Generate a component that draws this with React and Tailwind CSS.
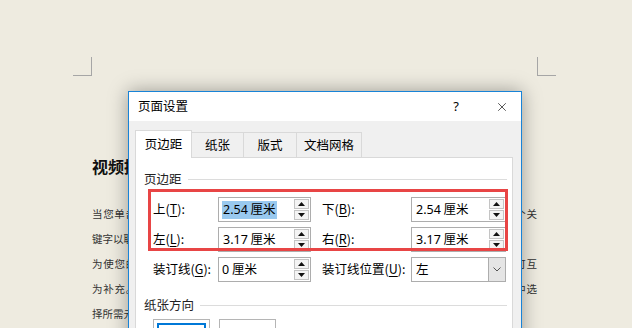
import { X } from 'lucide-react'

const cjk = { fontFamily: '"Microsoft YaHei UI","Noto Sans CJK SC","Noto Sans",sans-serif' }
const num = { fontFamily: '"Noto Sans","Noto Sans CJK SC",sans-serif' }

const bodyLines = [
  { text: '当您单击联机视频时，可以在想要添加的视频的嵌入代码中进行粘贴。您也可以键入一个关', full: true },
  { text: '键字以联机搜索最适合您的文档的视频。', full: false },
  { text: '为使您的文档具有专业外观，Word 提供了页眉、页脚、封面和文本框设计，这些设计可互', full: true },
  { text: '为补充。例如，您可以添加匹配的封面、页眉和提要栏。单击“插入”，然后从不同库中选', full: true },
  { text: '择所需元素。', full: false },
]

function Spinner() {
  return (
    <div className="flex h-full w-[15px] flex-col justify-center gap-px py-[1px]">
      <div className="flex h-[10px] items-center justify-center border border-[#c4c4c4] bg-[#f4f4f4]">
        <svg width="7" height="4" viewBox="0 0 7 4"><path d="M0 4 L3.5 0 L7 4 Z" fill="#111" /></svg>
      </div>
      <div className="flex h-[10px] items-center justify-center border border-[#c4c4c4] bg-[#f4f4f4]">
        <svg width="7" height="4" viewBox="0 0 7 4"><path d="M0 0 L3.5 4 L7 0 Z" fill="#111" /></svg>
      </div>
    </div>
  )
}

function SpinInput({ value, selected, w = 'w-[93px]' }) {
  return (
    <div className={`flex h-[25px] ${w} items-center border border-[#adadad] bg-white pl-[3px] pr-[1px]`}>
      <div className="flex-1 text-[12.5px] leading-none" style={cjk}>
        <span className={`inline-block px-px py-[2px] ${selected ? 'bg-[#99c9ef]' : ''}`}>
          <span style={num}>{value}</span> 厘米
        </span>
      </div>
      <Spinner />
    </div>
  )
}

function Label({ pre, k, w }) {
  return (
    <div className={`${w} text-[12.5px] text-black`} style={cjk}>
      {pre}(<span className="underline underline-offset-2">{k}</span>):
    </div>
  )
}

function Row({ l, r }) {
  return (
    <div className="flex h-[30px] items-center">
      <Label {...l.label} w="w-[65px]" />
      {l.input}
      <div className="w-[11px]" />
      <Label {...r.label} w="w-[89px]" />
      {r.input}
    </div>
  )
}

function Tab({ children, active, w }) {
  return active ? (
    <div className={`relative z-10 -mb-px flex h-[28px] ${w} items-center justify-center border border-b-0 border-[#d9d9d9] bg-white text-[12.5px]`}>
      {children}
    </div>
  ) : (
    <div className={`-ml-px flex h-[25px] ${w} items-center justify-center border border-b-0 border-[#d9d9d9] bg-[#f0f0f0] text-[12.5px]`}>
      {children}
    </div>
  )
}

function Group({ title }) {
  return (
    <div className="flex items-center gap-[6px] text-[12.5px] text-[#222]">
      <span>{title}</span>
      <div className="h-px flex-1 bg-[#dcdcdc]" />
    </div>
  )
}

export default function App() {
  return (
    <div className="relative h-[328px] w-[632px] overflow-hidden bg-[#eeebe0]" style={cjk}>
      {/* page */}
      <div className="pt-[57px]">
        <div className="flex justify-between pl-[73px] pr-[76px]">
          <div className="h-[19px] w-[19px] border-b border-r border-[#a6a6a6]" />
          <div className="h-[19px] w-[19px] border-b border-l border-[#a6a6a6]" />
        </div>
        <div className="mt-[78px] w-[445px] translate-x-[92px]">
          <div className="text-[16px] font-bold leading-[24px] text-[#111]">视频提供了功能强大的方法帮助您证明您的观点。</div>
          <div className="mt-[23px] text-[10.5px] leading-[25px] text-[#333]">
            {bodyLines.map((l) => (
              <div key={l.text} className={l.full ? 'text-justify [text-align-last:justify]' : ''}>{l.text}</div>
            ))}
          </div>
        </div>
      </div>

      {/* dialog */}
      <div className="absolute left-[128px] top-[91px] flex h-[300px] w-[394px] flex-col border border-[#1883d7] bg-[#f0f0f0] shadow-[0_0_18px_rgba(0,0,0,0.35)]">
        <div className="flex h-[29px] shrink-0 items-center bg-white pl-[9px] pr-[12px] text-[12.5px] text-black">
          <span className="flex-1">页面设置</span>
          <span className="mr-[36px] text-[13px]" style={num}>?</span>
          <X size={14} strokeWidth={1.2} color="#111" />
        </div>

        <div className="flex flex-1 flex-col pl-[6px] pr-[8px] pt-[9px]">
          <div className="flex shrink-0 items-end">
            <Tab active w="w-[57px]">页边距</Tab>
            <Tab w="w-[53px]">纸张</Tab>
            <Tab w="w-[54px]">版式</Tab>
            <Tab w="w-[66px]">文档网格</Tab>
          </div>
          <div className="relative flex-1 border border-[#d9d9d9] bg-white pl-[8px] pr-[5px] pt-[12px]">
            <Group title="页边距" />
            <div className="mt-[6px] pl-[9px]">
              <Row
                l={{ label: { pre: '上', k: 'T' }, input: <SpinInput value="2.54" selected /> }}
                r={{ label: { pre: '下', k: 'B' }, input: <SpinInput value="2.54" w="w-[95px]" /> }}
              />
              <Row
                l={{ label: { pre: '左', k: 'L' }, input: <SpinInput value="3.17" /> }}
                r={{ label: { pre: '右', k: 'R' }, input: <SpinInput value="3.17" w="w-[95px]" /> }}
              />
              <div className="flex h-[30px] items-center">
                <Label pre="装订线" k="G" w="w-[65px]" />
                <div className="flex h-[25px] w-[93px] items-center border border-[#adadad] bg-white pl-[3px] pr-[1px]">
                  <div className="flex-1 text-[12.5px] leading-none"><span style={num}>0</span> 厘米</div>
                  <Spinner />
                </div>
                <div className="w-[11px]" />
                <Label pre="装订线位置" k="U" w="w-[89px]" />
                <div className="flex h-[25px] w-[95px] items-center border border-[#adadad] bg-white">
                  <div className="flex-1 pl-[4px] text-[12.5px]">左</div>
                  <div className="flex h-full w-[17px] items-center justify-center border-l border-[#adadad] bg-[#e5e5e5]">
                    <svg width="8" height="5" viewBox="0 0 8 5"><path d="M0.5 0.5 L4 4 L7.5 0.5" fill="none" stroke="#555" strokeWidth="1" /></svg>
                  </div>
                </div>
              </div>
            </div>
            <div className="mt-[11px]">
              <Group title="纸张方向" />
            </div>
            <div className="mt-[4px] flex gap-[9px] pl-[9px]">
              <div className="h-[30px] w-[57px] border border-[#b5b5b5] p-[3px]">
                <div className="h-full w-full border-2 border-[#0078d7]" />
              </div>
              <div className="h-[30px] w-[57px] border border-[#b5b5b5]" />
            </div>

            {/* red annotation */}
            <div className="pointer-events-none absolute left-[12px] top-[31px] h-[62px] w-[360px] border-[3px] border-[#e84545]" />
          </div>
        </div>
      </div>
    </div>
  )
}
